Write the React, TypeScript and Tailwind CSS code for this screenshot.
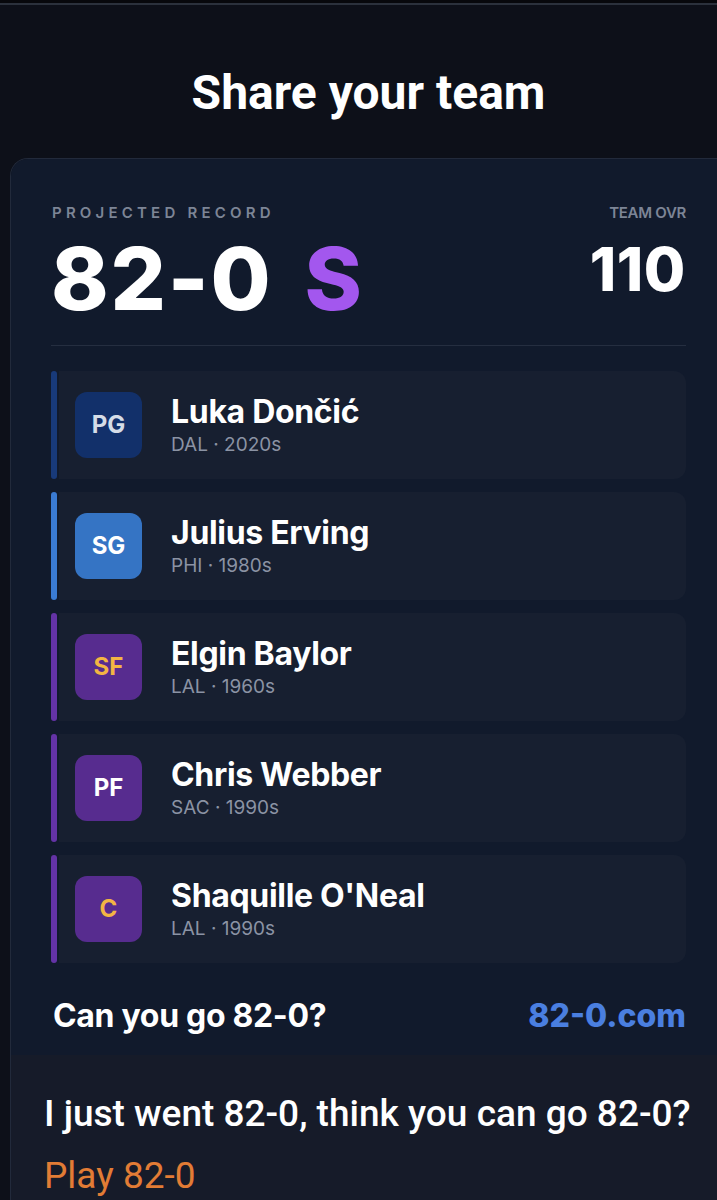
import React from 'react';

interface Player {
  pos: string;
  name: string;
  team: string;
  era: string;
  bar: string;
  badge: string;
  badgeText: string;
}

const players: Player[] = [
  { pos: 'PG', name: 'Luka Dončić', team: 'DAL', era: '2020s', bar: 'bg-[#183a7a]', badge: 'bg-[#12306a]', badgeText: 'text-[#d5dce7]' },
  { pos: 'SG', name: 'Julius Erving', team: 'PHI', era: '1980s', bar: 'bg-[#3a7bd3]', badge: 'bg-[#3574c4]', badgeText: 'text-white' },
  { pos: 'SF', name: 'Elgin Baylor', team: 'LAL', era: '1960s', bar: 'bg-[#6433a6]', badge: 'bg-[#572c8f]', badgeText: 'text-[#f3b543]' },
  { pos: 'PF', name: 'Chris Webber', team: 'SAC', era: '1990s', bar: 'bg-[#6433a6]', badge: 'bg-[#572c8f]', badgeText: 'text-white' },
  { pos: 'C', name: "Shaquille O'Neal", team: 'LAL', era: '1990s', bar: 'bg-[#6433a6]', badge: 'bg-[#572c8f]', badgeText: 'text-[#f3b543]' },
];

const narrow = { fontFamily: 'Roboto, "Noto Sans", sans-serif' };
const inter = { fontFamily: 'Inter, "Noto Sans", sans-serif' };

const PlayerRow: React.FC<{ p: Player }> = ({ p }) => (
  <div className="flex h-[108px] gap-[2px]">
    <div className={`w-[6px] rounded-full ${p.bar}`} />
    <div className="flex flex-1 items-center rounded-r-xl bg-[#171f30] pl-[16px]">
      <div className={`flex h-[66px] w-[67px] items-center justify-center rounded-[12px] ${p.badge}`}>
        <span className={`text-[24px] font-bold ${p.badgeText}`}>{p.pos}</span>
      </div>
      <div className="ml-[29px] flex flex-col">
        <span className="text-[32px] font-bold leading-[36px] tracking-[-0.01em] text-white">{p.name}</span>
        <span className="mt-[4px] text-[19px] leading-[22px] text-[#8b93a4]">
          {p.team} · {p.era}
        </span>
      </div>
    </div>
  </div>
);

export default function App() {
  return (
    <div className="h-[1200px] w-[717px] overflow-hidden bg-[#0d1019]">
      <div className="h-[3px] bg-[#07080c]" />
      <div className="h-[2px] bg-[#2b313c]" />

      <h1 style={narrow} className="mt-[60px] pl-[20px] text-center text-[48px] font-bold leading-[56px] text-white">
        Share your team
      </h1>

      <div className="ml-[10px] mt-[37px] w-[717px] overflow-hidden rounded-tl-[18px] border-l border-t border-[#222a3b]">
        <div style={inter} className="bg-[#111a2c] pb-[23px] pl-[40px] pr-[41px] pt-[46px]">
          <div className="flex items-start justify-between">
            <div>
              <div className="pl-[1px] text-[15px] font-semibold leading-4 tracking-[0.28em] text-[#7d8596]">PROJECTED RECORD</div>
              <div className="mt-[14px] text-[87px] font-extrabold leading-none tracking-[0.02em] text-white">
                82-0<span className="ml-[32px] text-[#a357ee]">S</span>
              </div>
            </div>
            <div className="flex flex-col items-end">
              <div className="text-[15px] font-semibold leading-4 tracking-[-0.02em] text-[#7d8596]">TEAM OVR</div>
              <div className="mt-[18px] text-[60px] font-extrabold leading-none tracking-[0.01em] text-white">110</div>
            </div>
          </div>

          <div className="mt-[23px] h-px bg-[#252e40]" />

          <div className="mt-[25px] flex flex-col gap-[13px]">
            {players.map(p => (
              <PlayerRow key={p.pos} p={p} />
            ))}
          </div>

          <div className="mt-[37px] flex items-center justify-between pl-[2px]">
            <span className="text-[32px] font-bold leading-none tracking-[-0.01em] text-white">Can you go 82-0?</span>
            <span className="text-[32px] font-extrabold leading-none text-[#4a7fe0]">82-0.com</span>
          </div>
        </div>

        <div style={narrow} className="h-[200px] bg-[#161b29] pl-[33px] pt-[36px]">
          <div className="text-[37px] font-medium leading-[46px] text-white">I just went 82-0, think you can go 82-0?</div>
          <div className="mt-[16px] text-[37px] leading-[46px] text-[#e27c35]">Play 82-0</div>
        </div>
      </div>
    </div>
  );
}
